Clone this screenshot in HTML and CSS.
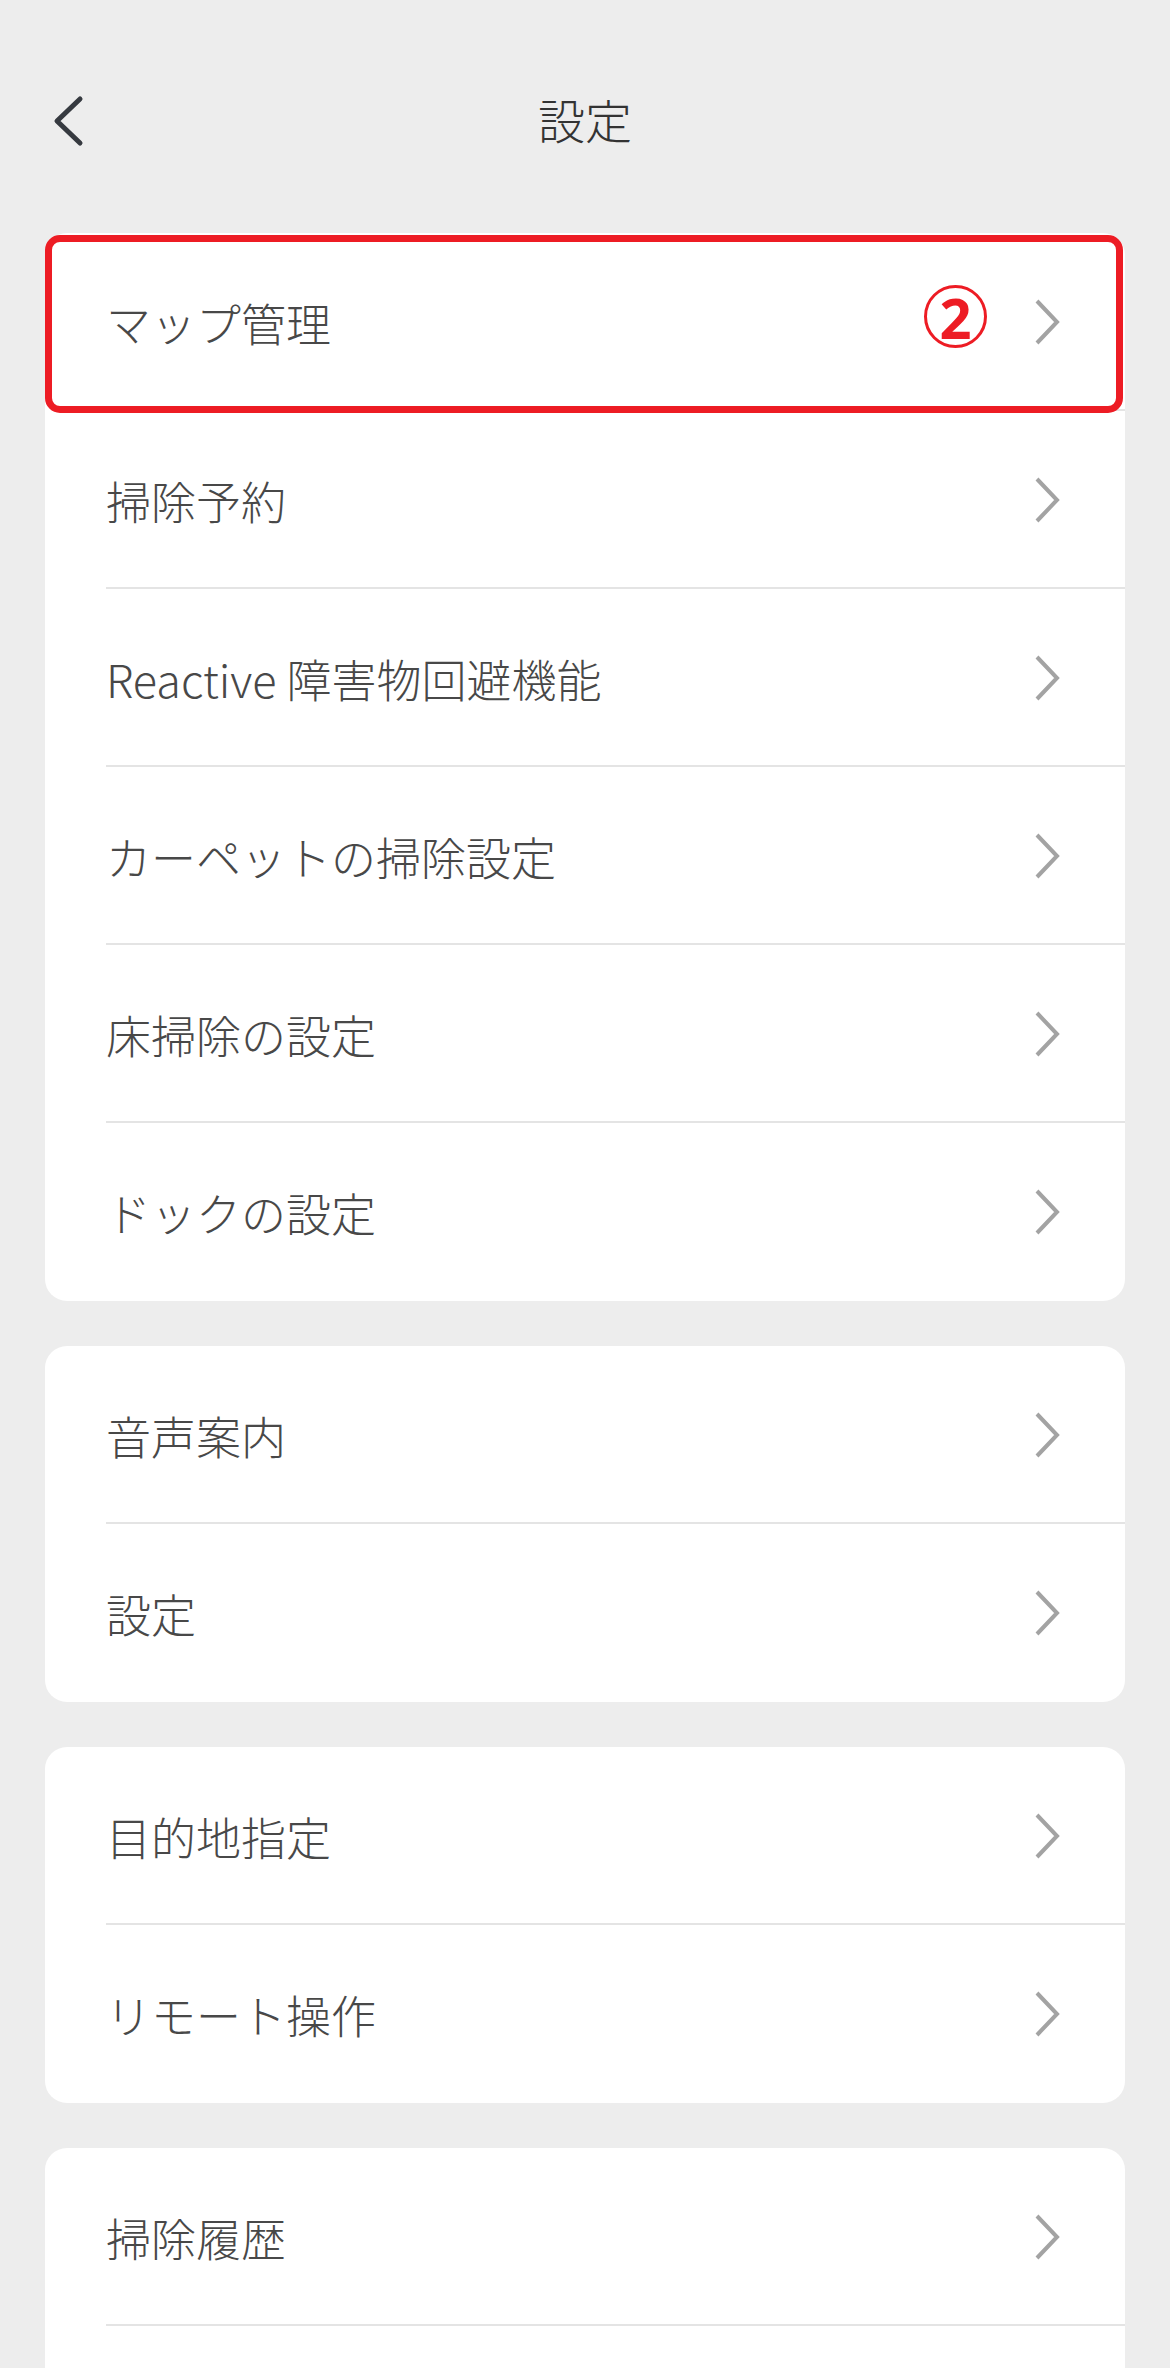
FILE: index.html
```html
<!DOCTYPE html>
<html lang="ja">
<head>
<meta charset="utf-8">
<title>設定</title>
<link rel="stylesheet" href="styles.css">
</head>
<body>
<header class="topbar">
  <span class="back">
    <svg width="40" height="56" viewBox="0 0 40 56"><path d="M31 6 L8 28 L31 50" fill="none" stroke="#363a40" stroke-width="5" stroke-linecap="round" stroke-linejoin="round"/></svg>
  </span>
  <h1 class="title">設定</h1>
</header>

<main class="groups">
  <section class="card">
    <div class="row">
      <span class="label">マップ管理</span>
      <span class="chev"><svg width="26" height="46" viewBox="0 0 26 46"><path d="M3 2 L23 23 L3 44" fill="none" stroke="#a3a3a3" stroke-width="4"/></svg></span>
      <span class="mark"></span>
      <span class="num">2</span>
    </div>
    <div class="row">
      <span class="label">掃除予約</span>
      <span class="chev"><svg width="26" height="46" viewBox="0 0 26 46"><path d="M3 2 L23 23 L3 44" fill="none" stroke="#a3a3a3" stroke-width="4"/></svg></span>
    </div>
    <div class="row">
      <span class="label">Reactive 障害物回避機能</span>
      <span class="chev"><svg width="26" height="46" viewBox="0 0 26 46"><path d="M3 2 L23 23 L3 44" fill="none" stroke="#a3a3a3" stroke-width="4"/></svg></span>
    </div>
    <div class="row">
      <span class="label">カーペットの掃除設定</span>
      <span class="chev"><svg width="26" height="46" viewBox="0 0 26 46"><path d="M3 2 L23 23 L3 44" fill="none" stroke="#a3a3a3" stroke-width="4"/></svg></span>
    </div>
    <div class="row">
      <span class="label">床掃除の設定</span>
      <span class="chev"><svg width="26" height="46" viewBox="0 0 26 46"><path d="M3 2 L23 23 L3 44" fill="none" stroke="#a3a3a3" stroke-width="4"/></svg></span>
    </div>
    <div class="row">
      <span class="label">ドックの設定</span>
      <span class="chev"><svg width="26" height="46" viewBox="0 0 26 46"><path d="M3 2 L23 23 L3 44" fill="none" stroke="#a3a3a3" stroke-width="4"/></svg></span>
    </div>
  </section>

  <section class="card">
    <div class="row">
      <span class="label">音声案内</span>
      <span class="chev"><svg width="26" height="46" viewBox="0 0 26 46"><path d="M3 2 L23 23 L3 44" fill="none" stroke="#a3a3a3" stroke-width="4"/></svg></span>
    </div>
    <div class="row">
      <span class="label">設定</span>
      <span class="chev"><svg width="26" height="46" viewBox="0 0 26 46"><path d="M3 2 L23 23 L3 44" fill="none" stroke="#a3a3a3" stroke-width="4"/></svg></span>
    </div>
  </section>

  <section class="card">
    <div class="row">
      <span class="label">目的地指定</span>
      <span class="chev"><svg width="26" height="46" viewBox="0 0 26 46"><path d="M3 2 L23 23 L3 44" fill="none" stroke="#a3a3a3" stroke-width="4"/></svg></span>
    </div>
    <div class="row">
      <span class="label">リモート操作</span>
      <span class="chev"><svg width="26" height="46" viewBox="0 0 26 46"><path d="M3 2 L23 23 L3 44" fill="none" stroke="#a3a3a3" stroke-width="4"/></svg></span>
    </div>
  </section>

  <section class="card">
    <div class="row">
      <span class="label">掃除履歴</span>
      <span class="chev"><svg width="26" height="46" viewBox="0 0 26 46"><path d="M3 2 L23 23 L3 44" fill="none" stroke="#a3a3a3" stroke-width="4"/></svg></span>
    </div>
    <div class="row">
      <span class="label"></span>
      <span class="chev"><svg width="26" height="46" viewBox="0 0 26 46"><path d="M3 2 L23 23 L3 44" fill="none" stroke="#a3a3a3" stroke-width="4"/></svg></span>
    </div>
  </section>
</main>
</body>
</html>
```

FILE: styles.css
```css
html, body {
  margin: 0;
  padding: 0;
  background: #ededed;
}
body {
  font-family: "Noto Sans CJK JP", "Noto Sans", sans-serif;
  color: #4a4a4a;
  width: 1170px;
}
.topbar {
  position: relative;
  height: 122px;
  padding-top: 57px;
  margin-bottom: 3px;
  display: flex;
  align-items: center;
  justify-content: center;
}
.back {
  position: absolute;
  left: 49px;
  top: 93px;
  display: block;
  width: 40px;
  height: 56px;
}
.back svg { display: block; }
.title {
  margin: 0;
  font-size: 47px;
  font-weight: 300;
  color: #333333;
  line-height: 1;
}
.groups {
  padding: 51px 45px 40px;
  display: flex;
  flex-direction: column;
  gap: 45px;
}
.card {
  background: #ffffff;
  border-radius: 22px;
}
.row {
  position: relative;
  height: 178px;
  display: flex;
  align-items: center;
  padding-left: 61px;
  padding-right: 65px;
}
.row + .row::before {
  content: "";
  position: absolute;
  left: 61px;
  right: 0;
  top: -2px;
  height: 2px;
  background: #e4e4e4;
}
.label {
  flex: 1;
  font-size: 45px;
  font-weight: 300;
  line-height: 1;
  color: #484848;
  white-space: nowrap;
}
.chev {
  display: block;
  width: 26px;
  height: 46px;
}
.chev svg { display: block; }
.mark {
  position: absolute;
  left: 0;
  right: 2px;
  top: 2px;
  bottom: -2px;
  border: 7px solid #ed1c24;
  border-radius: 15px;
  pointer-events: none;
  z-index: 2;
}
.num {
  position: absolute;
  left: 879px;
  top: 52px;
  width: 57px;
  height: 57px;
  border: 3px solid #ed1c24;
  border-radius: 50%;
  display: flex;
  align-items: center;
  justify-content: center;
  font-family: "Noto Sans", "DejaVu Sans", sans-serif;
  font-weight: 700;
  font-size: 56px;
  line-height: 1;
  color: #ed1c24;
}
```
